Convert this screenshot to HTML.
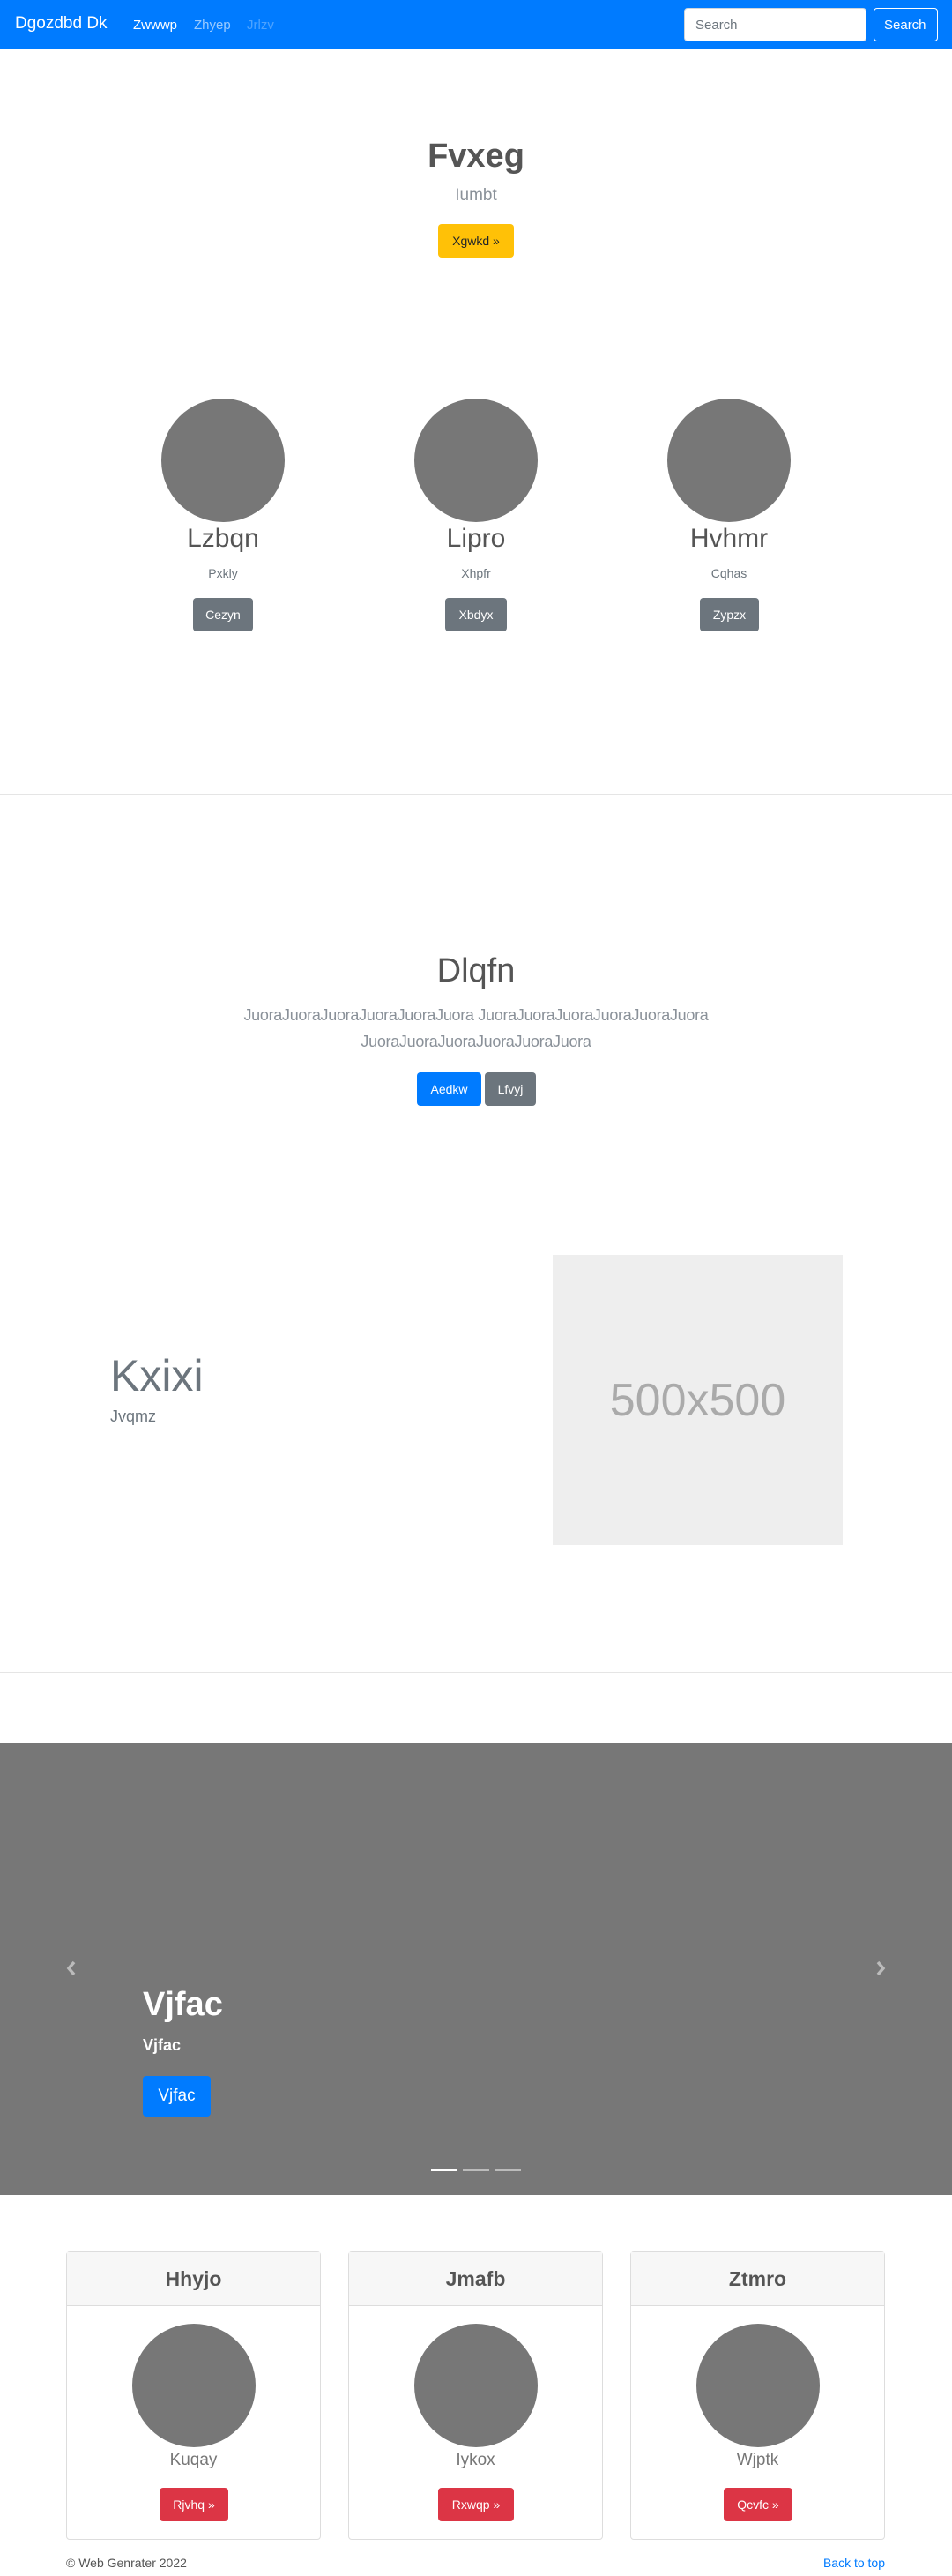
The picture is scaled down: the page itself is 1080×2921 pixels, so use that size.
<!DOCTYPE html>
<html><head><meta charset="utf-8">
<style>
*{box-sizing:border-box;margin:0;padding:0}
body{width:1080px;height:2921px;position:relative;font-family:"Liberation Sans",sans-serif;background:#fff;color:#212529;overflow:hidden}
.a{position:absolute}
.c{text-align:center}
.btn{position:absolute;border-radius:4px;color:#fff;font-size:15px;display:flex;align-items:center;justify-content:center}
.circ{position:absolute;width:140px;height:140px;border-radius:50%;background:#777}
</style></head><body>
<div class="a" style="left:0;top:0;width:1080px;height:56px;background:#007bff"></div>
<div class="a" style="left:17px;top:16px;font-size:19px;color:#fff">Dgozdbd Dk</div>
<div class="a" style="left:151px;top:20px;font-size:15px;color:#fff">Zwwwp</div>
<div class="a" style="left:220px;top:20px;font-size:15px;color:rgba(255,255,255,.6)">Zhyep</div>
<div class="a" style="left:280px;top:20px;font-size:15px;color:rgba(255,255,255,.3)">Jrlzv</div>
<div class="a" style="left:776px;top:9px;width:207px;height:38px;background:#fff;border-radius:4px;border:1px solid #ced4da;font-size:15px;color:#6c757d;padding:10px 12px">Search</div>
<div class="a" style="left:991px;top:9px;width:73px;height:38px;border:1px solid #fff;border-radius:4px;color:#fff;font-size:15px;padding:10px 11px">Search</div>

<div class="a c" style="left:0;width:1080px;top:156px;font-size:38px;font-weight:bold;color:#555">Fvxeg</div>
<div class="a c" style="left:0;width:1080px;top:211px;font-size:19px;color:#8a9199">Iumbt</div>
<div class="btn" style="left:497px;top:254px;width:86px;height:38px;background:#ffc107;color:#212529;font-size:14px">Xgwkd »</div>

<div class="circ" style="left:183px;top:452px"></div>
<div class="circ" style="left:470px;top:452px"></div>
<div class="circ" style="left:757px;top:452px"></div>
<div class="a c" style="left:103px;width:300px;top:594px;font-size:30px;color:#555">Lzbqn</div>
<div class="a c" style="left:390px;width:300px;top:594px;font-size:30px;color:#555">Lipro</div>
<div class="a c" style="left:677px;width:300px;top:594px;font-size:30px;color:#555">Hvhmr</div>
<div class="a c" style="left:103px;width:300px;top:642px;font-size:14px;color:#6c757d">Pxkly</div>
<div class="a c" style="left:390px;width:300px;top:642px;font-size:14px;color:#6c757d">Xhpfr</div>
<div class="a c" style="left:677px;width:300px;top:642px;font-size:14px;color:#6c757d">Cqhas</div>
<div class="btn" style="left:219px;top:678px;width:68px;height:38px;background:#6c757d;font-size:14px">Cezyn</div>
<div class="btn" style="left:505px;top:678px;width:70px;height:38px;background:#6c757d;font-size:14px">Xbdyx</div>
<div class="btn" style="left:794px;top:678px;width:67px;height:38px;background:#6c757d;font-size:14px">Zypzx</div>

<div class="a" style="left:0;top:900px;width:1080px;height:1px;background:#e5e5e5"></div>

<div class="a c" style="left:0;width:1080px;top:1080px;font-size:38px;font-weight:300;color:#555">Dlqfn</div>
<div class="a c" style="left:0;width:1080px;top:1136px;font-size:18px;line-height:30px;color:#8a9199;letter-spacing:-0.3px">JuoraJuoraJuoraJuoraJuoraJuora JuoraJuoraJuoraJuoraJuoraJuora<br>JuoraJuoraJuoraJuoraJuoraJuora</div>
<div class="btn" style="left:473px;top:1216px;width:73px;height:38px;background:#007bff;font-size:14px">Aedkw</div>
<div class="btn" style="left:550px;top:1216px;width:58px;height:38px;background:#6c757d;font-size:14px">Lfvyj</div>

<div class="a" style="left:125px;top:1531px;font-size:50px;color:#6c757d">Kxixi</div>
<div class="a" style="left:125px;top:1596px;font-size:18px;color:#6c757d">Jvqmz</div>
<div class="a" style="left:627px;top:1423px;width:329px;height:329px;background:#eee;display:flex;align-items:center;justify-content:center;font-size:52px;color:#aaa">500x500</div>

<div class="a" style="left:0;top:1896px;width:1080px;height:1px;background:#e5e5e5"></div>

<div class="a" style="left:0;top:1977px;width:1080px;height:512px;background:#777"></div>
<svg class="a" style="left:74px;top:2223px" width="14" height="18" viewBox="0 0 14 18"><path d="M10 2 L4 9 L10 16" stroke="#bbb" stroke-width="3.5" fill="none"/></svg>
<svg class="a" style="left:992px;top:2223px" width="14" height="18" viewBox="0 0 14 18"><path d="M4 2 L10 9 L4 16" stroke="#bbb" stroke-width="3.5" fill="none"/></svg>
<div class="a" style="left:162px;top:2252px;font-size:38px;font-weight:bold;color:#fff">Vjfac</div>
<div class="a" style="left:162px;top:2309px;font-size:18px;font-weight:bold;color:#fff">Vjfac</div>
<div class="btn" style="left:162px;top:2354px;width:77px;height:46px;background:#007bff;font-size:19px">Vjfac</div>
<div class="a" style="left:489px;top:2459px;width:30px;height:3px;background:#fff"></div>
<div class="a" style="left:525px;top:2459px;width:30px;height:3px;background:rgba(255,255,255,.5)"></div>
<div class="a" style="left:561px;top:2459px;width:30px;height:3px;background:rgba(255,255,255,.5)"></div>

<div class="a" style="left:75px;top:2553px;width:289px;height:327px;border:1px solid #ddd;border-radius:4px"></div>
<div class="a" style="left:395px;top:2553px;width:289px;height:327px;border:1px solid #ddd;border-radius:4px"></div>
<div class="a" style="left:715px;top:2553px;width:289px;height:327px;border:1px solid #ddd;border-radius:4px"></div>
<div class="a c" style="left:76px;top:2554px;width:287px;height:61px;background:#f7f7f7;border-bottom:1px solid #ddd;font-size:23px;font-weight:bold;color:#555;line-height:60px">Hhyjo</div>
<div class="a c" style="left:396px;top:2554px;width:287px;height:61px;background:#f7f7f7;border-bottom:1px solid #ddd;font-size:23px;font-weight:bold;color:#555;line-height:60px">Jmafb</div>
<div class="a c" style="left:716px;top:2554px;width:287px;height:61px;background:#f7f7f7;border-bottom:1px solid #ddd;font-size:23px;font-weight:bold;color:#555;line-height:60px">Ztmro</div>
<div class="circ" style="left:150px;top:2635px"></div>
<div class="circ" style="left:470px;top:2635px"></div>
<div class="circ" style="left:790px;top:2635px"></div>
<div class="a c" style="left:75px;width:289px;top:2779px;font-size:19px;color:#777">Kuqay</div>
<div class="a c" style="left:395px;width:289px;top:2779px;font-size:19px;color:#777">Iykox</div>
<div class="a c" style="left:715px;width:289px;top:2779px;font-size:19px;color:#777">Wjptk</div>
<div class="btn" style="left:181px;top:2821px;width:78px;height:38px;background:#dc3545;font-size:14px">Rjvhq »</div>
<div class="btn" style="left:497px;top:2821px;width:86px;height:38px;background:#dc3545;font-size:14px">Rxwqp »</div>
<div class="btn" style="left:821px;top:2821px;width:78px;height:38px;background:#dc3545;font-size:14px">Qcvfc »</div>

<div class="a" style="left:75px;top:2898px;font-size:14px;color:#555">© Web Genrater 2022</div>
<div class="a" style="left:904px;width:100px;text-align:right;top:2898px;font-size:14px;color:#007bff">Back to top</div>
</body></html>
